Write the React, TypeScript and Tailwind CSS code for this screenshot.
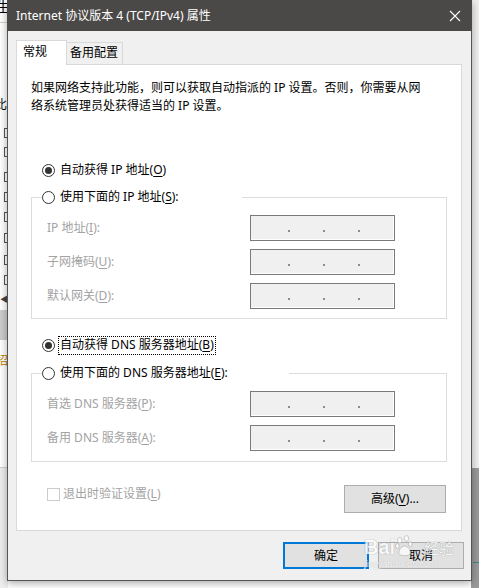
import type { ReactNode } from "react";
import clsx from "clsx";

function Radio({ checked, focus, children }: { checked?: boolean; focus?: boolean; children: ReactNode }) {
  return (
    <div className="flex h-[18px] items-center">
      <span className="flex h-[13px] w-[13px] items-center justify-center rounded-full border border-[#333333] bg-white">
        {checked && <span className="h-[7px] w-[7px] rounded-full bg-[#333333]" />}
      </span>
      <span
        className={clsx(
          "ml-[3px] flex h-[19px] items-center border px-[1px] text-black",
          focus ? "border-dotted border-black" : "border-transparent"
        )}
      >
        {children}
      </span>
    </div>
  );
}

function IpField() {
  return (
    <div className="flex h-[26px] w-[145px] items-start border border-[#7a7a7a] bg-[#f0f0f0] pl-[37px] pt-[14px] shadow-[inset_-1px_-1px_0_#ffffff]">
      <span className="h-[2px] w-[2px] bg-[#8c8c9c]" />
      <span className="ml-[33px] h-[2px] w-[2px] bg-[#8c8c9c]" />
      <span className="ml-[33px] h-[2px] w-[2px] bg-[#8c8c9c]" />
    </div>
  );
}

function FieldRow({ label }: { label: ReactNode }) {
  return (
    <div className="flex h-[26px] items-center">
      <span className="w-[203px] text-[#a3a3a3]">{label}</span>
      <IpField />
    </div>
  );
}

function Key({ k }: { k: string }) {
  return <span className="underline underline-offset-2">{k}</span>;
}

export default function App() {
  return (
    <div className="relative h-[588px] w-[479px] overflow-hidden bg-white font-['Noto_Sans','Noto_Sans_CJK_SC',sans-serif] text-[12px] leading-[18px]">
      {/* background window, mostly hidden */}
      <div className="absolute left-0 top-0 h-[588px] w-[8px] text-black">
        <div className="absolute left-[-4px] top-[-2px] text-[14px]">生</div>
        <div className="absolute left-0 top-[22px] h-px w-[8px] bg-[#d0d0d0]" />
        <div className="absolute left-[-5px] top-[96px] text-[12px]">比</div>
        {[128, 147, 172, 192, 212, 233, 255, 275].map((y) => (
          <div key={y} className="absolute left-[4px] h-[10px] w-[6px] border border-[#555555] bg-white" style={{ top: y }} />
        ))}
        <div className="absolute left-0 top-[290px] text-[8px] text-[#444]">◀</div>
        <div className="absolute left-0 top-[310px] h-[30px] w-[8px] bg-[#cccccc]" />
        <div className="absolute left-[-4px] top-[352px] text-[12px] text-[#c08000]">招</div>
        <div className="absolute left-0 top-[467px] h-[121px] w-[8px] border-t border-[#d0d0d0] bg-[#eeeeee]" />
      </div>
      <div className="absolute right-0 top-0 h-[588px] w-[8px] bg-[#f0f0f0]">
        <div className="absolute left-0 top-[468px] h-[120px] w-[8px] bg-[#9a9a9a]" />
        <div className="absolute left-[2px] top-[562px] h-px w-[6px] bg-[#3a8a8a]" />
      </div>

      {/* dialog window */}
      <div className="absolute left-[7px] top-0 flex h-[581px] w-[465px] flex-col border-x border-b border-[#555555] bg-[#f0f0f0] shadow-[0_2px_8px_rgba(0,0,0,0.35)]">
        <div className="-mx-px flex h-[31px] items-center justify-between bg-[#4b4947] pl-[9px] pr-[10px] text-white">
          <span className="text-[12px]">Internet 协议版本 4 (TCP/IPv4) 属性</span>
          <svg width="12" height="12" viewBox="0 0 12 12" className="mr-[1px]">
            <path d="M1 1 L11 11 M11 1 L1 11" stroke="#ffffff" strokeWidth="1.1" />
          </svg>
        </div>

        <div className="flex flex-1 flex-col pl-[8px] pr-[7px] pt-[9px]">
          {/* tabs */}
          <div className="flex items-end">
            <div className="relative z-10 -mb-px flex h-[25px] w-[51px] items-start border-x border-t border-[#d9d9d9] bg-white pl-[6px] pt-[2px]">
              常规
            </div>
            <div className="flex h-[22px] w-[56px] items-start border-r border-t border-[#d9d9d9] bg-[#f0f0f0] pl-[3px] pt-[1px]">
              备用配置
            </div>
          </div>

          {/* panel */}
          <div className="mr-[2px] flex flex-col border border-[#d9d9d9] bg-white px-[14px] pb-[17px] pt-[14px]">
            <p className="text-black">
              如果网络支持此功能，则可以获取自动指派的 IP 设置。否则，你需要从网
              <br />
              络系统管理员处获得适当的 IP 设置。
            </p>

            <div className="ml-[11px] mt-[46px]">
              <Radio checked>
                自动获得 IP 地址(<Key k="O" />)
              </Radio>
            </div>

            <fieldset className="mt-[9px] border border-[#dcdcdc]">
              <legend className="ml-[10px] w-[200px]">
                <Radio>
                  使用下面的 IP 地址(<Key k="S" />):
                </Radio>
              </legend>
              <div className="flex flex-col gap-[8px] pb-[9px] pl-[15px] pt-[9px]">
                <FieldRow label={<>IP 地址(<Key k="I" />):</>} />
                <FieldRow label={<>子网掩码(<Key k="U" />):</>} />
                <FieldRow label={<>默认网关(<Key k="D" />):</>} />
              </div>
            </fieldset>

            <div className="ml-[11px] mt-[17px]">
              <Radio checked focus>
                自动获得 DNS 服务器地址(<Key k="B" />)
              </Radio>
            </div>

            <fieldset className="mt-[10px] border border-[#dcdcdc]">
              <legend className="ml-[10px] w-[247px]">
                <Radio>
                  使用下面的 DNS 服务器地址(<Key k="E" />):
                </Radio>
              </legend>
              <div className="flex flex-col gap-[8px] pb-[10px] pl-[15px] pt-[9px]">
                <FieldRow label={<>首选 DNS 服务器(<Key k="P" />):</>} />
                <FieldRow label={<>备用 DNS 服务器(<Key k="A" />):</>} />
              </div>
            </fieldset>

            <div className="mt-[23px] flex items-start justify-between">
              <div className="ml-[16px] flex h-[18px] items-center">
                <span className="h-[13px] w-[13px] border border-[#cccccc] bg-white" />
                <span className="ml-[3px] text-[#a3a3a3]">
                  退出时验证设置(<Key k="L" />)
                </span>
              </div>
              <button className="mr-[1px] flex h-[28px] w-[102px] items-center justify-center border border-[#adadad] bg-[#e1e1e1] text-black">
                高级(<Key k="V" />)...
              </button>
            </div>
          </div>

          {/* dialog buttons */}
          <div className="mt-[11px] flex justify-end gap-[9px]">
            <button className="flex h-[27px] w-[86px] items-center justify-center border-2 border-[#0078d7] bg-[#e1e1e1] text-black">
              确定
            </button>
            <button className="flex h-[27px] w-[86px] items-center justify-center border border-[#adadad] bg-[#e1e1e1] text-black">
              取消
            </button>
          </div>
        </div>
      </div>

      {/* watermark */}
      <div className="pointer-events-none absolute left-[364px] top-[534px] flex flex-col text-white opacity-75">
        <div className="flex items-end">
          <span className="font-['Liberation_Sans',sans-serif] text-[20px] font-bold leading-[24px] [text-shadow:0_0_1px_#9a9a9a,0_0_1px_#9a9a9a]">
            Bai
          </span>
          <svg width="19" height="24" viewBox="0 0 20 24" className="mb-[1px]">
            <g fill="#ffffff" stroke="#a8a8a8" strokeWidth="0.8">
              <ellipse cx="5" cy="6" rx="2.4" ry="3" />
              <ellipse cx="12" cy="4" rx="2.4" ry="3" />
              <ellipse cx="2.5" cy="12" rx="2" ry="2.6" />
              <ellipse cx="16" cy="10" rx="2" ry="2.6" />
              <path d="M4 20 C4 14 8 12 10 12 C13 12 17 16 16 20 C15 23 5 23 4 20 Z" />
            </g>
          </svg>
          <span className="ml-[10px] text-[15px] leading-[21px] [text-shadow:0_0_1px_#9a9a9a,0_0_1px_#9a9a9a]">经验</span>
        </div>
        <span className="mt-[1px] font-['Liberation_Sans',sans-serif] text-[9px] leading-[9px] [text-shadow:0_0_1px_#9a9a9a]">
          jingyan.baidu.com
        </span>
      </div>
    </div>
  );
}
